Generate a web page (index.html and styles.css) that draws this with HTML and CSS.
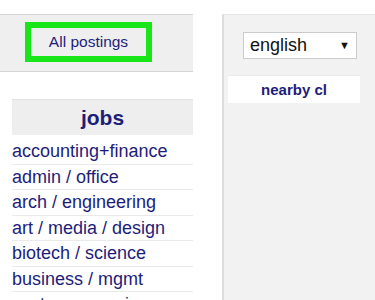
FILE: index.html
```html
<!DOCTYPE html>
<html lang="en-US">
    <head>
        <meta charset="UTF-8">
        <title>craigslist</title>
        <link rel="stylesheet" href="styles.css">
    </head>
    <body>
        <div class="leftcol">
            <div class="topbar">
                <a class="allpost" href="#">All postings</a>
            </div>
            <div class="jobs">
                <h2>jobs</h2>
                <ul>
                    <li><a href="#">accounting+finance</a></li>
                    <li><a href="#">admin / office</a></li>
                    <li><a href="#">arch / engineering</a></li>
                    <li><a href="#">art / media / design</a></li>
                    <li><a href="#">biotech / science</a></li>
                    <li><a href="#">business / mgmt</a></li>
                    <li><a href="#">customer service</a></li>
                </ul>
            </div>
        </div>
        <div class="rightcol">
            <div class="lang">
                <span>english</span>
                <span class="arrow">&#9660;</span>
            </div>
            <div class="nearby"><a href="#">nearby cl</a></div>
        </div>
    </body>
</html>
```

FILE: styles.css
```css
* {
    margin: 0;
    padding: 0;
}
body {
    background: #FFF;
    color: #222;
    font: 18px/1.5 "Liberation Sans", Arial, sans-serif;
    display: flex;
    align-items: flex-start;
    height: 300px;
    overflow: hidden;
}
a {
    color: #1d1d7a;
    text-decoration: none;
}
.leftcol {
    width: 193px;
    padding-top: 14px;
}
.topbar {
    height: 56px;
    background: #EFEFEF;
    border-top: 1px solid #D4D4D4;
    border-bottom: 1px solid #D4D4D4;
    display: flex;
    align-items: center;
    padding-left: 25px;
}
.allpost {
    display: block;
    box-sizing: border-box;
    width: 127px;
    height: 40px;
    margin-top: -2px;
    border: 6px solid #19E619;
    font-size: 15.5px;
    line-height: 27px;
    text-align: center;
}
.jobs {
    margin: 27px 0 0 12px;
}
.jobs h2 {
    background: #EEE;
    height: 35px;
    line-height: 36px;
    font-size: 21px;
    text-align: center;
    color: #1d1d7a;
    border-top: 1px solid #E2E2E2;
}
.jobs ul {
    list-style: none;
    padding-top: 4px;
}
.jobs li {
    height: 24.5px;
    line-height: 24px;
    border-bottom: 1px solid #EAEAEA;
}
.rightcol {
    flex: 1;
    margin: 14px 0 0 29px;
    height: 286px;
    background: #F2F2F2;
    border-left: 2px solid #DCDCDC;
    border-top: 1px solid #E6E6E6;
    padding: 17px 15px 0 4px;
}
.lang {
    display: flex;
    justify-content: space-between;
    align-items: center;
    box-sizing: border-box;
    width: 114px;
    height: 27px;
    margin-left: 15px;
    background: #FFF;
    border: 1px solid #CCC;
    padding: 0 6px 0 6px;
    font-size: 18px;
    color: #111;
}
.lang .arrow {
    font-size: 11px;
}
.nearby {
    margin-top: 16px;
    height: 27px;
    line-height: 27px;
    background: #FFF;
    text-align: center;
    font-size: 15px;
    font-weight: bold;
    border-top: 1px solid #EAEAEA;
}
```
